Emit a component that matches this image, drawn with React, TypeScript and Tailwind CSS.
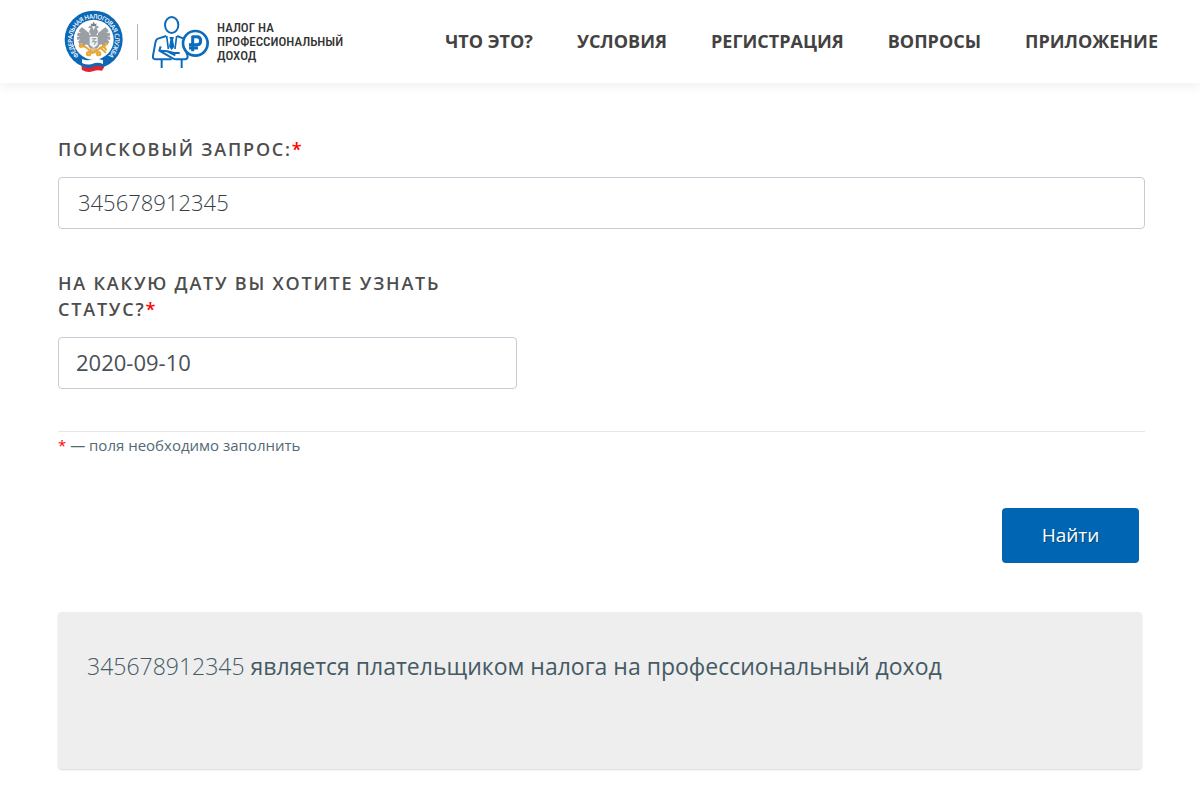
import { useState, type FormEvent } from "react";

const NAV_ITEMS = [
  { href: "#about", label: "Что это?" },
  { href: "#conditions", label: "Условия" },
  { href: "#registration", label: "Регистрация" },
  { href: "#questions", label: "Вопросы" },
  { href: "#application", label: "Приложение" },
];

function FnsEmblem() {
  return (
    <svg viewBox="42 27 180 192" className="h-16 w-15 shrink-0" aria-hidden="true">
      <defs>
        <path id="emblem-ring" d="M79 168A73 73 0 1 1 183 168" />
      </defs>
      <circle cx="131" cy="116" r="87" fill="#0b68b5" />
      <circle cx="131" cy="116" r="60" fill="#fff" />
      <text
        fill="#fff"
        fontSize="19"
        fontWeight="600"
        fontFamily="'Open Sans', sans-serif"
        dominantBaseline="central"
        textAnchor="middle"
      >
        <textPath href="#emblem-ring" startOffset="50%">
          ФЕДЕРАЛЬНАЯ НАЛОГОВАЯ СЛУЖБА
        </textPath>
      </text>
      {/* double-headed eagle */}
      <g fill="#9a9fa5">
        <path d="M118 96c-8-3-13-12-22-17-4 3-8 7-10 12l7 5-10-1-2 9 9 1-9 3 1 9 9-2-7 7 5 8 8-5-4 9 8 5 7-9 10 4z" />
        <path d="M144 96c8-3 13-12 22-17 4 3 8 7 10 12l-7 5 10-1 2 9-9 1 9 3-1 9-9-2 7 7-5 8-8-5 4 9-8 5-7-9-10 4z" />
        <path d="M115 80c3-7 9-7 12-2l4 9 4-9c3-5 9-5 12 2l-7 2 5 10-6 10h-16l-6-10 5-10z" />
        <path d="M114 102h34v30q-3 12-17 16-14-4-17-16z" />
        <path d="M121 142h20l8 19-18-5-18 5z" fill="#dfc08a" />
      </g>
      <path d="M124 76l-2-9 5 3 4-8 4 8 5-3-2 9z" fill="#777d86" />
      <path d="M119 107h24v23q-3 7-12 11-9-4-12-11z" fill="#f1f2f2" />
      <path d="M125 113h11l-8 9h10l-6 9" fill="none" stroke="#a3a9af" strokeWidth="4" />
      <g fill="none" stroke="#e8a635" strokeWidth="6" strokeLinecap="round">
        <path d="M91 132l17 7 18 15M172 128l-18 12-26 16" />
        <circle cx="93" cy="134" r="4" />
        <circle cx="116" cy="158" r="5" />
        <circle cx="146" cy="158" r="5" />
        <path d="M160 134l8 12M151 139l15 15" />
      </g>
      {/* flag ribbon */}
      <path d="M96 174q16 7 32 1 15-5 31 3v13q-16-7-31-1-16 6-32-2z" fill="#fff" />
      <path d="M96 186q16 8 32 2 16-6 31 1v10q-16-7-31 0-16 6-32-2z" fill="#1764b0" />
      <path d="M94 196q18 9 34 2 16-6 35 0l-7 11q-14-4-27 2-16 6-33-4z" fill="#df2430" />
    </svg>
  );
}

function TaxpayerIcon() {
  return (
    <svg
      viewBox="36 42 174 162"
      className="h-[54px] w-[58px] shrink-0"
      fill="none"
      stroke="#0c6cbc"
      strokeWidth="6"
      strokeLinejoin="round"
      aria-hidden="true"
    >
      <ellipse cx="98" cy="72" rx="20" ry="24" />
      <path d="M82 105L57 113Q52 115 50 121L42 164Q40 175 51 175H98" />
      <path d="M114 105L132 112" />
      <path d="M83 105l5 39M113 105l-5 39" strokeWidth="5" />
      <path d="M91 108h14l-3 8 4 21-8 10-8-10 4-21z" fill="#0c6cbc" stroke="none" />
      <path d="M65 136L61 149L101 172Q106 175 113 175H138Q146 175 146 166Q146 161 141 156" />
      <path d="M64 149L85 151L104 156H122M85 151L109 163" />
      <path d="M68 176v25M128 176v25" />
      <circle cx="169" cy="127" r="37" strokeWidth="8" />
      <path d="M161 151V107H174Q185 107 185 119Q185 131 174 131H150M150 141H177" strokeWidth="9" />
    </svg>
  );
}

function Header() {
  return (
    <header className="bg-white shadow-[0_4px_10px_rgba(0,0,0,0.06)]">
      <div className="flex min-h-[83px] items-center justify-between pr-[42px] pl-16">
        <a href="#" className="flex items-center" aria-label="Налог на профессиональный доход">
          <FnsEmblem />
          <span className="mx-[13px] h-9 w-px bg-[#b5b5b5]" />
          <TaxpayerIcon />
          <span className="ml-2 font-['Roboto_Condensed','Liberation_Sans_Narrow','DejaVu_Sans_Condensed',sans-serif] text-[13px] leading-[14px] font-medium text-[#333] uppercase">
            Налог на
            <br />
            профессиональный
            <br />
            доход
          </span>
        </a>
        <nav className="flex gap-11 pb-0.5">
          {NAV_ITEMS.map((item) => (
            <a
              key={item.href}
              href={item.href}
              className="text-lg font-bold whitespace-nowrap text-[#424242] uppercase"
            >
              {item.label}
            </a>
          ))}
        </nav>
      </div>
    </header>
  );
}

function Required() {
  return <span className="text-[#ff0000]">*</span>;
}

export default function App() {
  const [inn, setInn] = useState("345678912345");
  const [date, setDate] = useState("2020-09-10");
  const [checkedInn, setCheckedInn] = useState(inn);

  const handleSubmit = (e: FormEvent) => {
    e.preventDefault();
    setCheckedInn(inn);
  };

  return (
    <div className="min-h-screen bg-white pb-7 font-['Open_Sans',sans-serif]">
      <Header />
      <main className="pt-[53px] pr-[55px] pl-[58px]">
        <form onSubmit={handleSubmit}>
          <label
            htmlFor="inn"
            className="block text-lg leading-[26px] font-semibold tracking-widest text-[#4d4d4d] uppercase"
          >
            Поисковый запрос:
            <Required />
          </label>
          <input
            id="inn"
            type="text"
            required
            value={inn}
            onChange={(e) => setInn(e.target.value)}
            className="mt-[15px] h-[52px] w-full rounded border border-[#c6ccd5] px-[19px] pb-0.5 text-[22px] font-light text-[#373f47]"
          />
          <div className="mt-[41px] max-w-[459px]">
            <label
              htmlFor="date"
              className="block text-lg leading-[26px] font-semibold tracking-widest text-[#4d4d4d] uppercase"
            >
              На какую дату вы хотите узнать{" "}
              <span className="inline-block">
                статус?
                <Required />
              </span>
            </label>
            <input
              id="date"
              type="text"
              required
              value={date}
              onChange={(e) => setDate(e.target.value)}
              className="mt-[15px] h-[52px] w-full rounded border border-[#c6ccd5] px-[17px] pb-0.5 text-[22px] text-[#495057]"
            />
          </div>
          <hr className="mt-[42px] border-[#e5e7e9]" />
          <p className="mt-px text-[15px] leading-6 text-[#526a78]">
            <Required /> — поля необходимо заполнить
          </p>
          <div className="mt-[51px] flex justify-end pr-1.5">
            <button
              type="submit"
              className="h-[55px] w-[137px] rounded bg-[#0066b3] text-[19px] text-white [text-shadow:1px_1px_1px_rgba(0,0,0,0.3)]"
            >
              Найти
            </button>
          </div>
        </form>
        <section className="mt-[49px] mr-[3px] min-h-[157px] rounded bg-[#eee] px-[29px] pt-9 shadow-[0_1px_2px_rgba(0,0,0,0.15)]">
          <p className="text-[23px] leading-9 text-[#455a64]">
            <span className="font-light">{checkedInn}</span> является плательщиком налога на
            профессиональный доход
          </p>
        </section>
      </main>
    </div>
  );
}
